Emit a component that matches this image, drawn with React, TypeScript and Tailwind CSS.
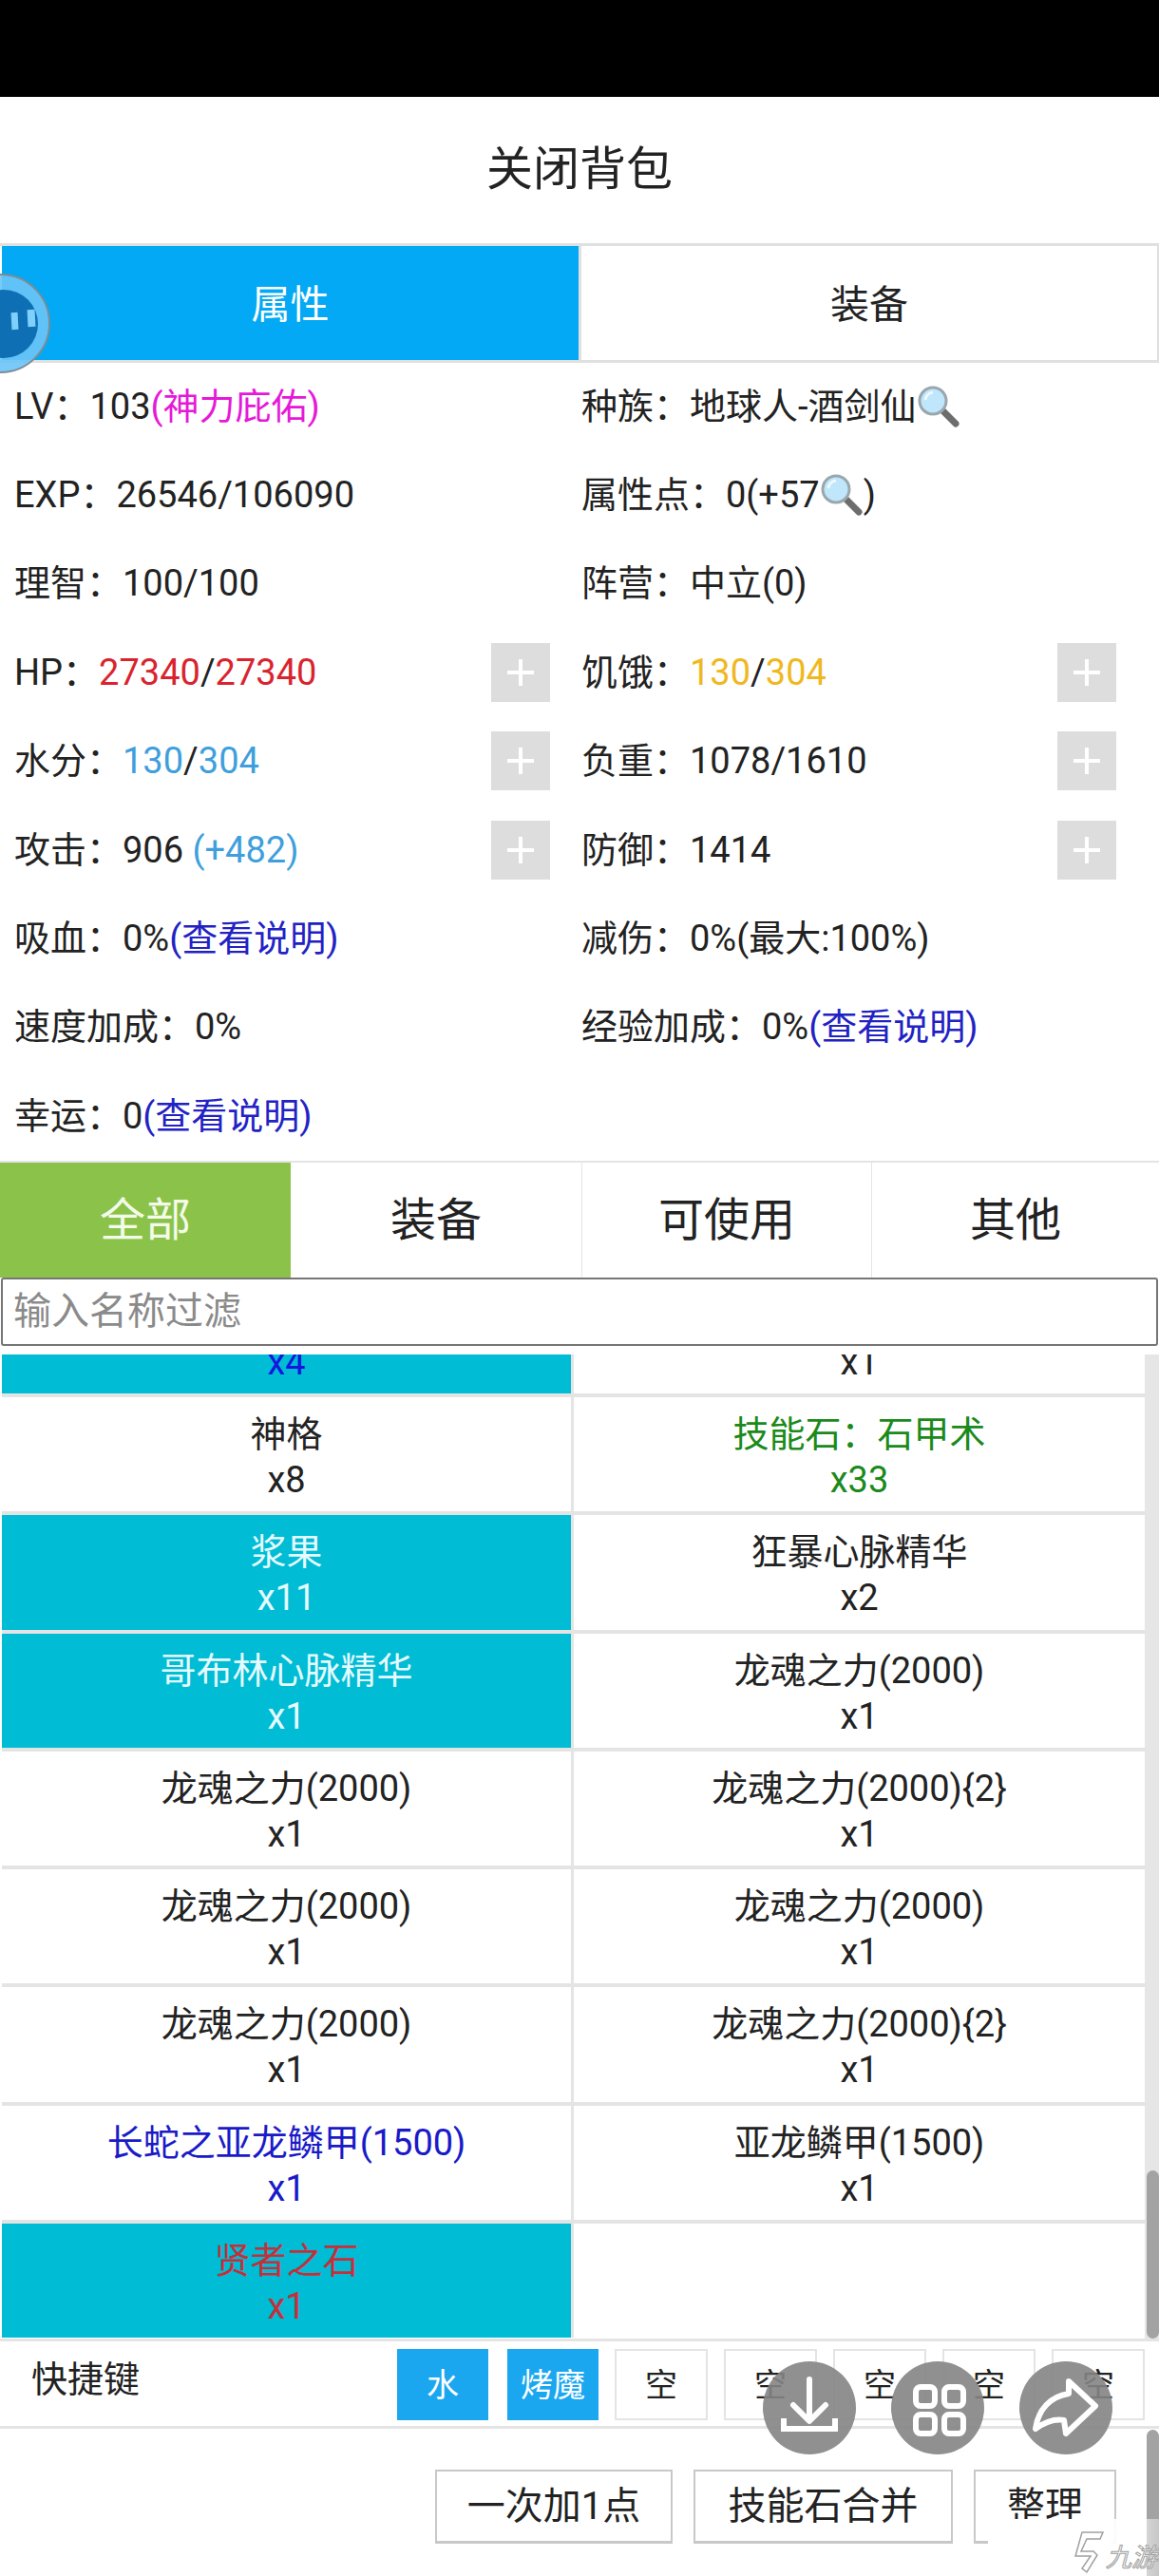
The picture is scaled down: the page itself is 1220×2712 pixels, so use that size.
import React from "react";

const font = { fontFamily: '"Roboto", "Noto Sans CJK SC", sans-serif' };

function Magnifier() {
  return (
    <svg viewBox="0 0 46 46" className="inline-block w-[46px] h-[46px] align-[-10px]">
      <path d="M28 28 L41 41" stroke="#6d6d6d" strokeWidth="7" strokeLinecap="round" />
      <circle cx="17" cy="17" r="14" fill="#bfe6fb" stroke="#9aa7ad" strokeWidth="3" />
      <path d="M9 16 A9 9 0 0 1 17 8" stroke="#eefaff" strokeWidth="3" fill="none" />
    </svg>
  );
}

function Plus() {
  return (
    <button className="w-[62px] h-[62px] bg-[#dddddd] flex items-center justify-center shrink-0">
      <svg viewBox="0 0 30 30" className="w-[30px] h-[30px]">
        <path d="M15 1V29M1 15H29" stroke="#ffffff" strokeWidth="4" />
      </svg>
    </button>
  );
}

function Stat({ children, plus }: { children: React.ReactNode; plus?: boolean }) {
  return (
    <div className="h-[93.4px] flex items-center justify-between pr-[33px] whitespace-nowrap">
      <div>{children}</div>
      {plus && <Plus />}
    </div>
  );
}

const items: { name?: string; count?: string; hl?: boolean; color?: string }[] = [
  { name: "神格", count: "x8" },
  { name: "技能石：石甲术", count: "x33", color: "text-[#1b8a1b]" },
  { name: "浆果", count: "x11", hl: true, color: "text-[#e6fbff]" },
  { name: "狂暴心脉精华", count: "x2" },
  { name: "哥布林心脉精华", count: "x1", hl: true, color: "text-[#e6fbff]" },
  { name: "龙魂之力(2000)", count: "x1" },
  { name: "龙魂之力(2000)", count: "x1" },
  { name: "龙魂之力(2000){2}", count: "x1" },
  { name: "龙魂之力(2000)", count: "x1" },
  { name: "龙魂之力(2000)", count: "x1" },
  { name: "龙魂之力(2000)", count: "x1" },
  { name: "龙魂之力(2000){2}", count: "x1" },
  { name: "长蛇之亚龙鳞甲(1500)", count: "x1", color: "text-[#1a1ac8]" },
  { name: "亚龙鳞甲(1500)", count: "x1" },
  { name: "贤者之石", count: "x1", hl: true, color: "text-[#c62f3a]" },
  {},
];

function Item({ name, count, hl, color }: { name?: string; count?: string; hl?: boolean; color?: string }) {
  return (
    <div className={`h-[120.3px] text-center leading-[48px] pt-[15px] ${hl ? "bg-[#00bcd4]" : "bg-white"} ${color || "text-[#222]"}`}>
      <div className="h-[48px]">{name}</div>
      <div>{count}</div>
    </div>
  );
}

export default function App() {
  return (
    <div className="relative w-[1220px] h-[2712px] overflow-hidden bg-white text-[#222] text-[38px]" style={font}>
      <div className="h-[102px] bg-black" />
      <div className="h-[154px] flex items-center justify-center text-[49px]">关闭背包</div>

      <div className="h-[126px] flex border-y-[3px] border-[#e0e0e0] text-[41px]">
        <div className="w-[607px] ml-[2px] pt-[5px] bg-[#03a9f4] text-white flex items-center justify-center">属性</div>
        <div className="flex-1 pt-[5px] border-l-[3px] border-r-[2px] border-[#e0e0e0] flex items-center justify-center">装备</div>
      </div>

      <div className="grid grid-cols-[597px_596px] pl-[15px] -mt-[1px] mb-[1px] leading-none h-[840px]">
        <Stat>LV：103<span className="text-[#e619d8]">(神力庇佑)</span></Stat>
        <Stat>种族：地球人-酒剑仙<Magnifier /></Stat>
        <Stat>EXP：26546/106090</Stat>
        <Stat>属性点：0(+57<Magnifier />)</Stat>
        <Stat>理智：100/100</Stat>
        <Stat>阵营：中立(0)</Stat>
        <Stat plus>HP：<span className="text-[#d9232e]">27340</span>/<span className="text-[#d9232e]">27340</span></Stat>
        <Stat plus>饥饿：<span className="text-[#f0b820]">130</span>/<span className="text-[#f0b820]">304</span></Stat>
        <Stat plus>水分：<span className="text-[#3f9fdc]">130</span>/<span className="text-[#3f9fdc]">304</span></Stat>
        <Stat plus>负重：1078/1610</Stat>
        <Stat plus>攻击：906 <span className="text-[#3f9fdc]">(+482)</span></Stat>
        <Stat plus>防御：1414</Stat>
        <Stat>吸血：0%<span className="text-[#2222c4]">(查看说明)</span></Stat>
        <Stat>减伤：0%(最大:100%)</Stat>
        <Stat>速度加成：0%</Stat>
        <Stat>经验加成：0%<span className="text-[#2222c4]">(查看说明)</span></Stat>
        <Stat>幸运：0<span className="text-[#2222c4]">(查看说明)</span></Stat>
      </div>

      <div className="h-[123px] grid grid-cols-[306px_306px_305px_303px] border-t-[2px] border-[#e4e4e4] text-[48px]">
        <div className="bg-[#8bc34a] text-[#f4fbe9] flex items-center justify-center">全部</div>
        <div className="flex items-center justify-center">装备</div>
        <div className="border-l-[1px] border-[#e4e4e4] flex items-center justify-center">可使用</div>
        <div className="border-l-[1px] border-[#e4e4e4] flex items-center justify-center">其他</div>
      </div>

      <div className="h-[72px] mx-[1px] border-[2px] border-[#767676] rounded-[3px] px-[11px] flex items-center text-[#8a8a8a] text-[40px]">
        输入名称过滤
      </div>

      <div className="mt-[9px] h-[1036px] flex overflow-hidden">
        <div className="w-[1205px] pl-[2px] overflow-hidden">
          <div className="-mt-[79.3px] grid grid-cols-[599px_601px] gap-x-[3px] gap-y-[4px] bg-[#e4e4e4]">
            <Item hl color="text-[#1616e0]" count="x4" />
            <Item count="x1" />
            {items.map((it, i) => (
              <Item key={i} {...it} />
            ))}
          </div>
        </div>
        <div className="w-[15px] pl-[2px] bg-[#e6e6e6] flex flex-col justify-end">
          <div className="h-[177px] bg-[#a3a3a3] rounded-[7px]" />
        </div>
      </div>

      <div className="h-[95px] border-y-[3px] border-[#e4e4e4] flex items-center pl-[33px] pr-[15px]">
        <div className="flex-1 -mt-[8px]">快捷键</div>
        <div className="flex gap-[19px] text-[34px] pt-[1px]">
          <div className="w-[96px] h-[75px] bg-[#1aa7f0] text-white flex items-center justify-center pt-[3px]">水</div>
          <div className="w-[96px] h-[75px] -ml-[-1px] bg-[#1aa7f0] text-white flex items-center justify-center pt-[3px]">烤魔</div>
          {[0, 1, 2, 3, 4].map((i) => (
            <div key={i} className="w-[98px] h-[75px] -ml-[2px] border-[2px] border-[#e4e4e4] flex items-center justify-center pt-[3px]">空</div>
          ))}
        </div>
      </div>

      <div className="flex justify-end gap-[22px] pr-[45px] pt-[43px] text-[40px]">
        <div className="w-[250px] h-[78px] border-[2px] border-b-[3px] border-[#c8c8c8] flex items-center justify-center">一次加1点</div>
        <div className="w-[273px] h-[78px] border-[2px] border-b-[3px] border-[#c8c8c8] flex items-center justify-center">技能石合并</div>
        <div className="w-[150px] h-[78px] border-[2px] border-b-[3px] border-[#c8c8c8] flex items-center justify-center">整理</div>
      </div>

      {/* outer page scrollbar */}
      <div className="absolute left-[1207px] top-[2558px] w-[13px] h-[154px] bg-[#a3a3a3] rounded-t-[7px]" />

      {/* floating ball */}
      <div className="absolute left-[-52px] top-[288px] w-[105px] h-[105px] rounded-full bg-[#6cc4f8]/90 border-[2px] border-[#7d8c96] flex items-center justify-center">
        <div className="w-[72px] h-[72px] ml-[6px] rounded-full bg-[#0e6fb5]" />
      </div>
      <div className="absolute left-[12px] top-[329px] w-[7px] h-[18px] bg-[#7fd0fb] -rotate-3" />
      <div className="absolute left-[29px] top-[326px] w-[8px] h-[18px] bg-[#7fd0fb] -rotate-3" />

      {/* overlay buttons */}
      <div className="absolute left-[803px] top-[2486px] w-[98px] h-[98px] rounded-full bg-[#848484]/90 flex items-center justify-center">
        <svg viewBox="0 0 98 98" className="w-[98px] h-[98px]" fill="none" stroke="#fff" strokeWidth="6">
          <path d="M49 19V62M32 46L49 63L66 46" strokeLinecap="round" strokeLinejoin="round" />
          <path d="M22 60V71H76V60" />
        </svg>
      </div>
      <div className="absolute left-[938px] top-[2486px] w-[98px] h-[98px] rounded-full bg-[#848484]/90">
        <svg viewBox="0 0 98 98" className="w-[98px] h-[98px]" fill="none" stroke="#fff" strokeWidth="6">
          <rect x="26" y="27" width="20" height="20" rx="5" />
          <rect x="56" y="27" width="20" height="20" rx="5" />
          <rect x="26" y="56" width="20" height="20" rx="5" />
          <rect x="56" y="56" width="20" height="20" rx="5" />
        </svg>
      </div>
      <div className="absolute left-[1073px] top-[2486px] w-[98px] h-[98px] rounded-full bg-[#848484]/90">
        <svg viewBox="0 0 98 98" className="w-[98px] h-[98px]" fill="none" stroke="#fff" strokeWidth="6" strokeLinejoin="round" strokeLinecap="round">
          <path d="M52 21L80 47L49 76L47 62C36 60 27 64 17 71C20 50 33 37 52 34Z" />
        </svg>
      </div>

      {/* watermark */}
      <div className="absolute left-[1040px] top-[2652px] w-[180px] h-[60px] bg-gradient-to-r from-white via-white via-70% to-white/40 flex items-end justify-end pr-[2px] gap-[1px]">
        <svg viewBox="0 0 34 46" className="w-[34px] h-[46px] mb-[2px]" fill="none" stroke="#a0a0a0" strokeWidth="1.5">
          <path d="M10 2H32L29 9H15L9 22H22L26 26L15 44L10 40L19 27H3Z" />
        </svg>
        <span className="italic text-white [-webkit-text-stroke:1px_#a0a0a0] text-[27px] leading-none mb-[5px]">九游</span>
      </div>
    </div>
  );
}
